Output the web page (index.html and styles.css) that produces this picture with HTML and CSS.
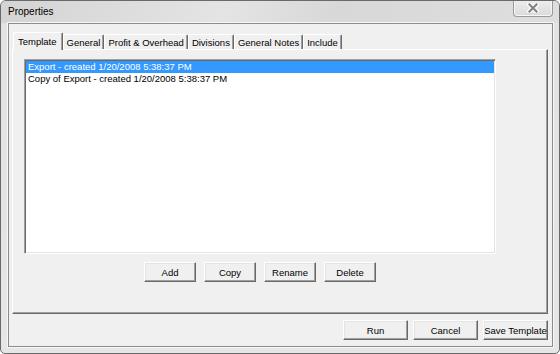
FILE: index.html
```html
<!DOCTYPE html>
<html lang="en">
<head>
    <meta charset="UTF-8">
    <title>Properties</title>
    <link rel="stylesheet" href="styles.css">
</head>
<body>
    <div class="window">
        <div class="titlebar">
            <span class="title">Properties</span>
            <button class="close" title="Close">
                <svg width="12" height="10" viewBox="0 0 12 10">
                    <path d="M2.5 1.5 L9.5 8.5 M9.5 1.5 L2.5 8.5" stroke="#ffffff" stroke-width="4.5" stroke-linecap="square"/>
                    <path d="M2.5 1.5 L9.5 8.5 M9.5 1.5 L2.5 8.5" stroke="#858585" stroke-width="2.2" stroke-linecap="square"/>
                </svg>
            </button>
        </div>
        <div class="client">
            <div class="tabs">
                <div class="tab active">Template</div>
                <div class="tab">General</div>
                <div class="tab">Profit &amp; Overhead</div>
                <div class="tab">Divisions</div>
                <div class="tab">General Notes</div>
                <div class="tab">Include</div>
            </div>
            <div class="panel">
                <div class="list">
                    <div class="item selected">Export - created 1/20/2008 5:38:37 PM</div>
                    <div class="item">Copy of Export - created 1/20/2008 5:38:37 PM</div>
                </div>
                <div class="list-actions">
                    <button class="btn small">Add</button>
                    <button class="btn small">Copy</button>
                    <button class="btn small">Rename</button>
                    <button class="btn small">Delete</button>
                </div>
            </div>
            <div class="footer">
                <button class="btn wide">Run</button>
                <button class="btn wide">Cancel</button>
                <button class="btn wide">Save Template</button>
            </div>
        </div>
    </div>
</body>
</html>
```

FILE: styles.css
```css
body {
    margin: 0;
    font-family: "Liberation Sans", Arial, sans-serif;
    font-size: 9.5px;
    color: #000;
    background: #fff;
}
.window {
    box-sizing: border-box;
    width: 560px;
    height: 354px;
    border: 1px solid #6a6a6a;
    border-radius: 6px 6px 5px 5px;
    background: linear-gradient(to bottom, #d6d6d6 0, #e2e2e2 24px, #e6e6e6 100%);
    display: flex;
    flex-direction: column;
    overflow: hidden;
}
.titlebar {
    height: 23px;
    display: flex;
    justify-content: space-between;
    align-items: flex-start;
    background: linear-gradient(100deg, #d4d4d4 0%, #e4e4e4 40%, #d8d8d8 60%, #dedede 100%);
}
.title {
    font-size: 10px;
    padding: 5px 0 0 7px;
}
.close {
    width: 40px;
    height: 17px;
    margin: -1px 6px 0 0;
    padding: 0;
    border: 1px solid #9a9a9a;
    border-top: none;
    border-radius: 0 0 4px 4px;
    background: linear-gradient(to bottom, #eeeeee, #dadada);
    box-shadow: inset 0 0 0 1px #f6f6f6;
    display: flex;
    align-items: center;
    justify-content: center;
}
.client {
    flex: 1;
    margin: 0 6px 6px 7px;
    border: 1px solid #8c8c8c;
    box-shadow: 0 0 0 1px #f7f7f7;
    background: #f0f0f0;
    padding: 8px 4px 6px 3px;
    display: flex;
    flex-direction: column;
}
.tabs {
    display: flex;
    align-items: flex-end;
    height: 17px;
    padding-left: 1px;
    position: relative;
    z-index: 1;
}
.tab {
    box-sizing: border-box;
    height: 15px;
    padding: 1px 3px 0 3px;
    border-top: 1px solid #fff;
    border-left: 1px solid #fff;
    border-right: 1px solid #696969;
    box-shadow: inset -1px 0 #a0a0a0;
    border-radius: 2px 2px 0 0;
    line-height: 13px;
    white-space: nowrap;
    background: #f0f0f0;
}
.tab.active {
    height: 18px;
    margin-bottom: -1px;
    padding: 2px 5px 0 4px;
}
.panel {
    box-sizing: border-box;
    height: 265px;
    border: 1px solid;
    border-color: #fff #696969 #696969 #fff;
    box-shadow: inset -1px -1px #a0a0a0;
    padding: 9px 0 0 11px;
    display: flex;
    flex-direction: column;
    gap: 8px;
}
.list {
    box-sizing: border-box;
    width: 472px;
    height: 195px;
    background: #fff;
    border: 1px solid;
    border-color: #a0a0a0 #fff #fff #a0a0a0;
    box-shadow: inset 1px 1px #696969, inset -1px -1px #e3e3e3;
    padding: 1px;
}
.item {
    height: 12px;
    line-height: 12px;
    padding-left: 2px;
    white-space: nowrap;
}
.item.selected {
    background: #3399ff;
    color: #fff;
}
.list-actions {
    width: 472px;
    display: flex;
    justify-content: center;
    gap: 8px;
}
.btn {
    box-sizing: border-box;
    height: 20px;
    padding: 0;
    font-family: inherit;
    font-size: 9.5px;
    color: #000;
    background: #f0f0f0;
    border: 1px solid;
    border-color: #fff #696969 #696969 #fff;
    box-shadow: inset -1px -1px #a0a0a0, inset 1px 1px #e3e3e3;
    border-radius: 0;
}
.btn.small {
    width: 52px;
}
.btn.wide {
    width: 65px;
}
.footer {
    margin-top: 6px;
    display: flex;
    justify-content: flex-end;
    gap: 5px;
}
```
